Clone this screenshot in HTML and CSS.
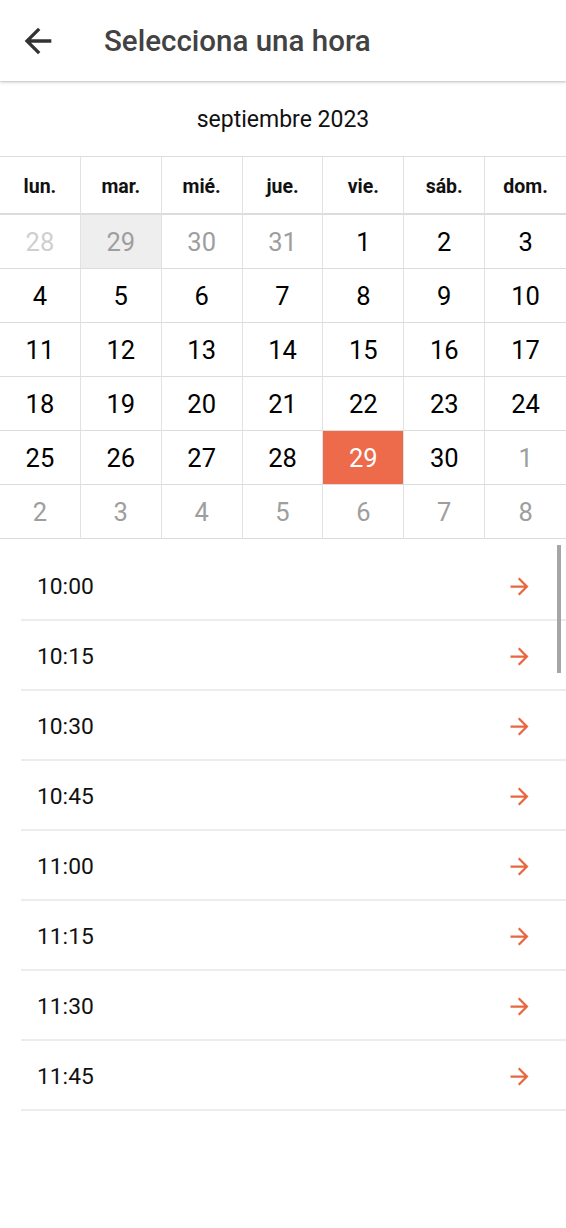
FILE: index.html
```html
<!DOCTYPE html>
<html lang="es">
<head>
<meta charset="utf-8">
<title>Selecciona una hora</title>
<link rel="stylesheet" href="styles.css">
</head>
<body>
<header class="appbar">
  <button class="back" aria-label="Volver">
    <svg viewBox="0 0 24 24" width="40" height="40"><path d="M20 11H7.830l5.59-5.59L12 4l-8 8 8 8 1.41-1.41L7.83 13H20v-2z" fill="#333"/></svg>
  </button>
  <h1 class="title">Selecciona una hora</h1>
</header>

<section class="calendar">
  <div class="month">septiembre 2023</div>
  <div class="grid">
    <div class="wd">lun.</div><div class="wd">mar.</div><div class="wd">mié.</div><div class="wd">jue.</div><div class="wd">vie.</div><div class="wd">sáb.</div><div class="wd">dom.</div>

    <div class="day faint">28</div><div class="day other today">29</div><div class="day other">30</div><div class="day other">31</div><div class="day">1</div><div class="day">2</div><div class="day">3</div>
    <div class="day">4</div><div class="day">5</div><div class="day">6</div><div class="day">7</div><div class="day">8</div><div class="day">9</div><div class="day">10</div>
    <div class="day">11</div><div class="day">12</div><div class="day">13</div><div class="day">14</div><div class="day">15</div><div class="day">16</div><div class="day">17</div>
    <div class="day">18</div><div class="day">19</div><div class="day">20</div><div class="day">21</div><div class="day">22</div><div class="day">23</div><div class="day">24</div>
    <div class="day">25</div><div class="day">26</div><div class="day">27</div><div class="day">28</div><div class="day selected">29</div><div class="day">30</div><div class="day other">1</div>
    <div class="day other">2</div><div class="day other">3</div><div class="day other">4</div><div class="day other">5</div><div class="day other">6</div><div class="day other">7</div><div class="day other">8</div>
  </div>
</section>

<section class="times">
  <div class="scrollbar"></div>
  <ul class="list">
    <li class="slot"><span>10:00</span><svg class="go" viewBox="0 0 24 24" width="27" height="27"><path d="M12 4l-1.41 1.41L16.17 11H4v2h12.17l-5.58 5.59L12 20l8-8z"/></svg></li>
    <li class="slot"><span>10:15</span><svg class="go" viewBox="0 0 24 24" width="27" height="27"><path d="M12 4l-1.41 1.41L16.17 11H4v2h12.17l-5.58 5.59L12 20l8-8z"/></svg></li>
    <li class="slot"><span>10:30</span><svg class="go" viewBox="0 0 24 24" width="27" height="27"><path d="M12 4l-1.41 1.41L16.17 11H4v2h12.17l-5.58 5.59L12 20l8-8z"/></svg></li>
    <li class="slot"><span>10:45</span><svg class="go" viewBox="0 0 24 24" width="27" height="27"><path d="M12 4l-1.41 1.41L16.17 11H4v2h12.17l-5.58 5.59L12 20l8-8z"/></svg></li>
    <li class="slot"><span>11:00</span><svg class="go" viewBox="0 0 24 24" width="27" height="27"><path d="M12 4l-1.41 1.41L16.17 11H4v2h12.17l-5.58 5.59L12 20l8-8z"/></svg></li>
    <li class="slot"><span>11:15</span><svg class="go" viewBox="0 0 24 24" width="27" height="27"><path d="M12 4l-1.41 1.41L16.17 11H4v2h12.17l-5.58 5.59L12 20l8-8z"/></svg></li>
    <li class="slot"><span>11:30</span><svg class="go" viewBox="0 0 24 24" width="27" height="27"><path d="M12 4l-1.41 1.41L16.17 11H4v2h12.17l-5.58 5.59L12 20l8-8z"/></svg></li>
    <li class="slot"><span>11:45</span><svg class="go" viewBox="0 0 24 24" width="27" height="27"><path d="M12 4l-1.41 1.41L16.17 11H4v2h12.17l-5.58 5.59L12 20l8-8z"/></svg></li>
  </ul>
</section>
</body>
</html>
```

FILE: styles.css
```css
* { box-sizing: border-box; }

html, body {
  margin: 0;
  padding: 0;
  background: #fff;
  font-family: Roboto, "Noto Sans", Arial, sans-serif;
  color: #000;
}

.appbar {
  height: 81px;
  display: flex;
  align-items: center;
  padding-left: 18px;
  background: #fff;
  box-shadow: 0 1px 2px rgba(0,0,0,0.18), 0 2px 4px rgba(0,0,0,0.08);
  position: relative;
  z-index: 1;
}

.back {
  border: 0;
  background: none;
  padding: 0;
  width: 40px;
  height: 40px;
  display: flex;
  margin-top: 1px;
}

.title {
  margin: 0 0 0 46px;
  font-size: 29.5px;
  font-weight: 500;
  color: #424242;
}

.month {
  height: 75px;
  display: flex;
  align-items: center;
  justify-content: center;
  font-size: 23px;
  color: #111;
  padding-top: 1px;
}

.grid {
  display: grid;
  grid-template-columns: repeat(7, 1fr);
  border-top: 1px solid #dedede;
}

.wd {
  height: 58px;
  display: flex;
  align-items: center;
  justify-content: center;
  font-weight: 700;
  font-size: 19.5px;
  color: #111;
  border-right: 1px solid #e2e2e2;
  border-bottom: 2px solid #dcdcdc;
  padding-top: 2px;
}

.day {
  height: 54px;
  display: flex;
  align-items: center;
  justify-content: center;
  font-size: 25.5px;
  color: #000;
  border-right: 1px solid #e2e2e2;
  border-bottom: 1px solid #dcdcdc;
}

.wd:nth-child(7n), .day:nth-child(7n) { border-right: 0; }

.day.other { color: #9e9e9e; }
.day.faint { color: #cfcfcf; }
.day.today { background: #eeeeee; }
.day.selected { background: #ed6a4b; color: #fff; }

.times {
  position: relative;
  padding-top: 12px;
}

.list {
  list-style: none;
  margin: 0;
  padding: 0 0 0 21px;
}

.slot {
  height: 70px;
  display: flex;
  align-items: center;
  justify-content: space-between;
  padding: 2px 33px 0 16px;
  border-bottom: 2px solid #ececec;
  font-size: 22.8px;
  color: #111;
}

.go { fill: #e9673f; }

.scrollbar {
  position: absolute;
  top: 6px;
  right: 5px;
  width: 4px;
  height: 128px;
  background: #a6a6a6;
}
```
